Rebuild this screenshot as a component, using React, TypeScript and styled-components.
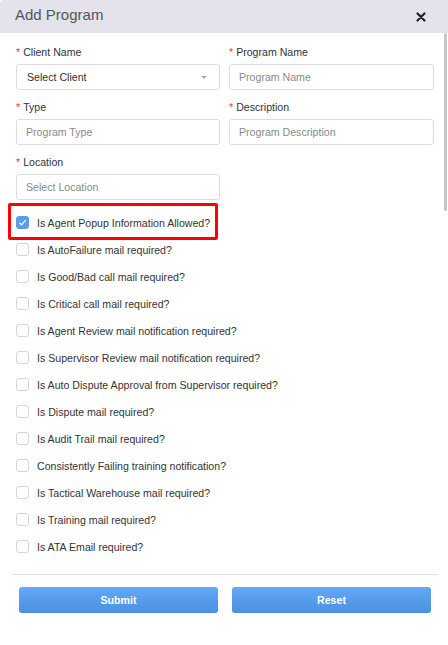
import React from "react";
import styled, { createGlobalStyle } from "styled-components";

const Global = createGlobalStyle`
  html, body { margin: 0; padding: 0; background: #ffffff; }
  body { font-family: "Liberation Sans", Arial, sans-serif; }
  *, *::before, *::after { box-sizing: border-box; }
`;

const Modal = styled.div`
  position: relative;
  width: 448px;
  height: 645px;
  background: #fff;
  overflow: hidden;
`;

const Header = styled.div`
  height: 33px;
  background: #e4e3ec;
  display: flex;
  align-items: center;
  justify-content: space-between;
  padding: 0 22px 0 15px;
  border-top-left-radius: 4px;
`;

const Title = styled.h2`
  margin: 0;
  font-size: 15px;
  font-weight: 400;
  color: #555;
  line-height: 18px;
  padding-bottom: 4px;
`;

const Close = styled.button`
  border: 0;
  background: none;
  padding: 0;
  width: 10px;
  height: 10px;
  display: flex;
  margin-top: 1px;
  cursor: pointer;
`;

const ScrollThumb = styled.div`
  position: absolute;
  right: 1px;
  top: 33px;
  width: 3px;
  height: 178px;
  background: #c6c6c6;
  border-radius: 2px;
`;

const Body = styled.div`
  padding: 11px 14px 0 16px;
`;

const Grid = styled.div`
  display: grid;
  grid-template-columns: 204px 205px;
  column-gap: 9px;
  row-gap: 9px;
`;

const Field = styled.div`
  display: flex;
  flex-direction: column;
  gap: 4px;
`;

const Label = styled.label`
  font-size: 10.6px;
  line-height: 16px;
  color: #333;
  &::before {
    content: "*";
    color: #e53935;
    margin-right: 3px;
  }
`;

const Input = styled.input`
  height: 26px;
  width: 100%;
  border: 1px solid #dcdde2;
  border-radius: 3px;
  padding: 0 9px;
  font-family: inherit;
  font-size: 10.6px;
  color: #333;
  outline: none;
  &::placeholder { color: #8a8a8a; }
`;

const SelectBox = styled.div`
  height: 26px;
  border: 1px solid #dcdde2;
  border-radius: 3px;
  padding: 0 10px;
  display: flex;
  align-items: center;
  justify-content: space-between;
  font-size: 10.6px;
  color: #333;
  &::after {
    content: "";
    border-left: 3px solid transparent;
    border-right: 3px solid transparent;
    border-top: 3px solid #aaa;
    margin-right: 2px;
  }
`;

const CheckList = styled.div`
  display: flex;
  flex-direction: column;
  margin-top: 9px;
`;

const Row = styled.label<{ $highlight?: boolean }>`
  position: relative;
  height: 27px;
  display: flex;
  align-items: center;
  gap: 8px;
  font-size: 10.6px;
  color: #333;
  ${(p) =>
    p.$highlight &&
    `
    &::after {
      content: "";
      position: absolute;
      left: -8px;
      top: -6px;
      width: 210px;
      height: 37px;
      border: 3px solid #ff0000;
      border-radius: 2px;
      pointer-events: none;
    }
  `}
`;

const Box = styled.span<{ $checked?: boolean }>`
  width: 13px;
  height: 13px;
  border-radius: 3px;
  border: 1px solid ${(p) => (p.$checked ? "#5b9bea" : "#d4d6dc")};
  background: ${(p) => (p.$checked ? "#5b9bea" : "#fff")};
  display: flex;
  align-items: center;
  justify-content: center;
  flex: none;
`;

const Divider = styled.hr`
  margin: 14px -4px 0 -4px;
  border: 0;
  border-top: 1px solid #dfdfe6;
`;

const Buttons = styled.div`
  display: grid;
  grid-template-columns: 199px 199px;
  column-gap: 14px;
  padding: 12px 0 0 3px;
`;

const Button = styled.button`
  height: 26px;
  border: 0;
  border-radius: 3px;
  background: linear-gradient(to bottom, #62a9f7, #4b8fe1);
  color: #fff;
  font-family: inherit;
  font-weight: 700;
  font-size: 10.6px;
  cursor: pointer;
`;

const items = [
  "Is Agent Popup Information Allowed?",
  "Is AutoFailure mail required?",
  "Is Good/Bad call mail required?",
  "Is Critical call mail required?",
  "Is Agent Review mail notification required?",
  "Is Supervisor Review mail notification required?",
  "Is Auto Dispute Approval from Supervisor required?",
  "Is Dispute mail required?",
  "Is Audit Trail mail required?",
  "Consistently Failing training notification?",
  "Is Tactical Warehouse mail required?",
  "Is Training mail required?",
  "Is ATA Email required?",
];

export default function App() {
  return (
    <>
      <Global />
      <Modal>
        <Header>
          <Title>Add Program</Title>
          <Close aria-label="close">
            <svg width="10" height="10" viewBox="0 0 10 10">
              <path d="M1.5 1.5 L8.5 8.5 M8.5 1.5 L1.5 8.5" stroke="#222" strokeWidth="2.2" strokeLinecap="round" />
            </svg>
          </Close>
        </Header>
        <ScrollThumb />
        <Body>
          <Grid>
            <Field>
              <Label>Client Name</Label>
              <SelectBox>Select Client</SelectBox>
            </Field>
            <Field>
              <Label>Program Name</Label>
              <Input placeholder="Program Name" />
            </Field>
            <Field>
              <Label>Type</Label>
              <Input placeholder="Program Type" />
            </Field>
            <Field>
              <Label>Description</Label>
              <Input placeholder="Program Description" />
            </Field>
            <Field>
              <Label>Location</Label>
              <Input placeholder="Select Location" />
            </Field>
          </Grid>
          <CheckList>
            {items.map((t, i) => (
              <Row key={t} $highlight={i === 0}>
                <Box $checked={i === 0}>
                  {i === 0 && (
                    <svg width="9" height="9" viewBox="0 0 9 9">
                      <path d="M1.5 4.8 L3.6 6.8 L7.6 2.2" fill="none" stroke="#fff" strokeWidth="1.2" />
                    </svg>
                  )}
                </Box>
                {t}
              </Row>
            ))}
          </CheckList>
          <Divider />
          <Buttons>
            <Button>Submit</Button>
            <Button>Reset</Button>
          </Buttons>
        </Body>
      </Modal>
    </>
  );
}
